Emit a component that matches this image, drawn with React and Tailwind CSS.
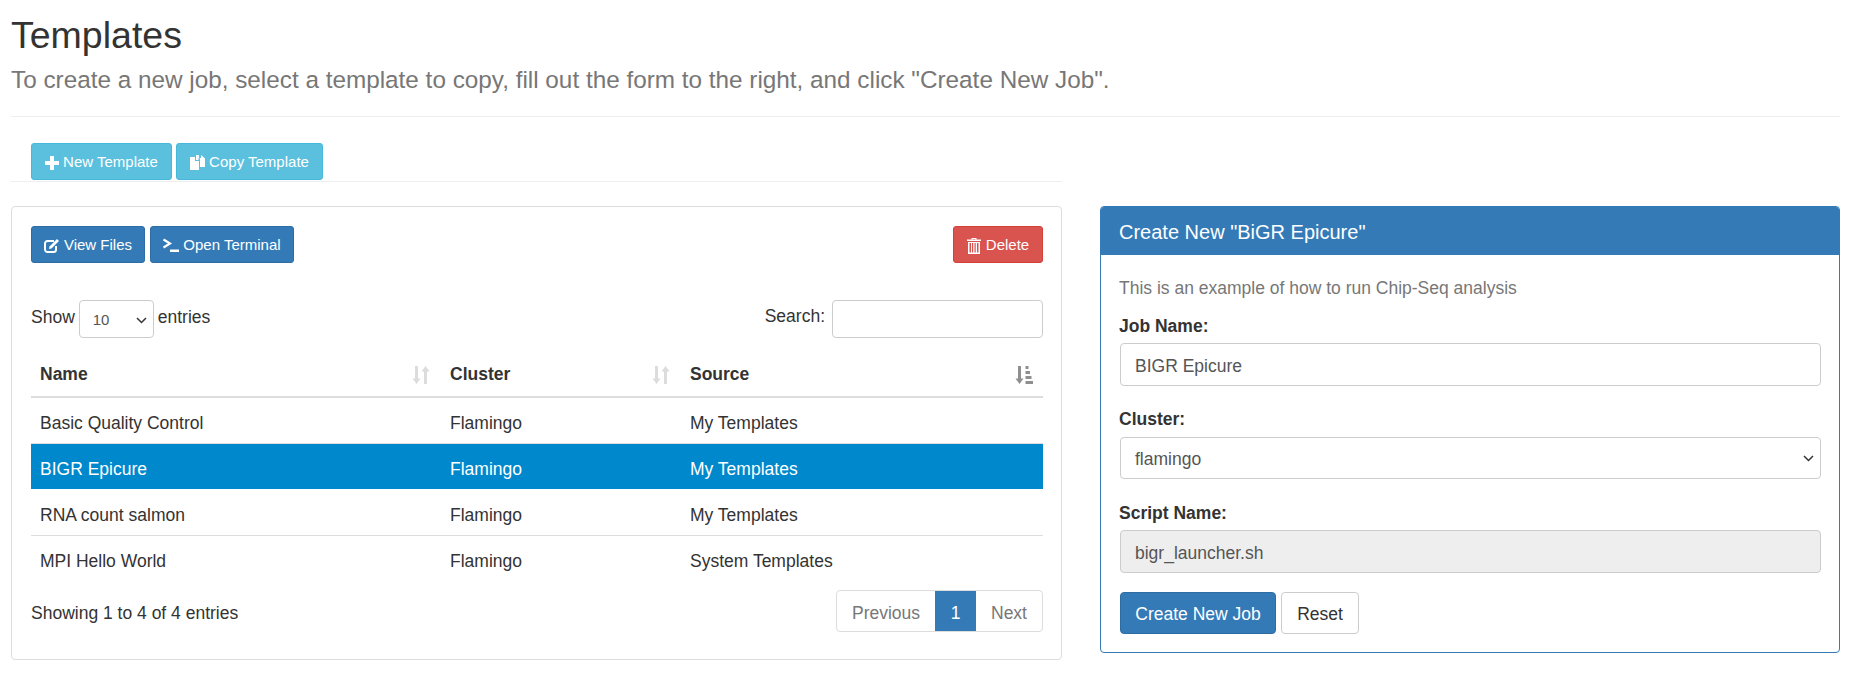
import React from 'react'

const font = { fontFamily: '"Liberation Sans", Arial, sans-serif' }

function PlusIcon() {
    return (
        <svg width="14" height="14" viewBox="0 0 14 14" fill="currentColor" className="shrink-0">
            <path d="M5 0h4v5h5v4H9v5H5V9H0V5h5z" />
        </svg>
    )
}

function CopyIcon() {
    return (
        <svg width="15" height="16" viewBox="0 0 15 16" fill="currentColor" className="shrink-0">
            <path d="M0 2h5v4h4v9H0z" />
            <path d="M6 1.500L9 5H6z" />
            <path d="M6 0h3v2.500l1 1v0H6z" opacity="0.900" />
            <path d="M10 3h1V0l4 3.500V12h-5z" />
        </svg>
    )
}

function EditIcon() {
    return (
        <svg width="16" height="16" viewBox="0 0 16 16" fill="none" className="shrink-0">
            <path d="M10 3H3.500A2.500 2.500 0 0 0 1 5.500v6A2.500 2.500 0 0 0 3.500 14h6a2.500 2.500 0 0 0 2.500-2.500V8" stroke="currentColor" strokeWidth="2" />
            <path d="M5.500 8.500L13 1l2 2-7.500 7.500-2.500.500z" fill="currentColor" />
        </svg>
    )
}

function TerminalIcon() {
    return (
        <svg width="16" height="15" viewBox="0 0 16 15" fill="none" className="shrink-0">
            <path d="M.500 1.500L7 5.500.500 9.500" stroke="currentColor" strokeWidth="2.200" />
            <path d="M7 11.500h9V14H7z" fill="currentColor" />
        </svg>
    )
}

function TrashIcon() {
    return (
        <svg width="14" height="16" viewBox="0 0 14 16" fill="currentColor" className="shrink-0">
            <path d="M4.500 0h5v1.500H14V3H0V1.500h4.500zM5.500 1v.500h3V1z" fillRule="evenodd" />
            <path d="M1 4h12v12H1zM2.500 5v9.500H4V5zm2.500 0v9.500h1.200V5zm2.500 0v9.500h1.200V5zM10 5v9.500h1.500V5z" fillRule="evenodd" />
        </svg>
    )
}

function SortBoth() {
    return (
        <svg width="18" height="18" viewBox="0 0 18 18" fill="#dcdcdc" className="shrink-0">
            <path d="M3 0h3v12.500h2.500L4.500 18 .500 12.500H3z" />
            <path d="M12 18h3V5.500h2.500L13.500 0l-4 5.500H12z" />
        </svg>
    )
}

function SortAsc() {
    return (
        <svg width="18" height="18" viewBox="0 0 18 18" fill="#8f8f8f" className="shrink-0">
            <path d="M3 0h3v12.500h2.500L4.500 18 .500 12.500H3z" />
            <path d="M10.500 0h3v3h-3zM10.500 5h4.500v3h-4.500zM10.500 10h6v3h-6zM10.500 15h7.500v3h-7.500z" />
        </svg>
    )
}

function Button({ className, children }) {
    return (
        <button className={`flex items-center justify-center h-[37px] pt-[2px] border rounded-[3px] text-white text-[15px] ${className}`}>
            {children}
        </button>
    )
}

const rows = [
    ['Basic Quality Control', 'Flamingo', 'My Templates'],
    ['BIGR Epicure', 'Flamingo', 'My Templates'],
    ['RNA count salmon', 'Flamingo', 'My Templates'],
    ['MPI Hello World', 'Flamingo', 'System Templates'],
]

function Chevron({ className }) {
    return (
        <svg width="11" height="7" viewBox="0 0 11 7" fill="none" className={`absolute pointer-events-none ${className}`}>
            <path d="M1 1l4.500 4.500L10 1" stroke="#333" strokeWidth="1.500" />
        </svg>
    )
}

function App() {
    return (
        <div className="min-h-screen bg-white text-[#333] text-[17.500px] px-[11px] overflow-hidden" style={font}>
            {/* Header */}
            <div className="pt-[10px] h-[117px] mr-[2px] border-b border-[#eee]">
                <h1 className="text-[37.500px] leading-[50px] text-[#333]">Templates</h1>
                <p className="text-[24.300px] leading-[30px] mt-[5px] text-[#777]">
                    To create a new job, select a template to copy, fill out the form to the right, and click "Create New Job".
                </p>
            </div>

            <div className="flex gap-[38px] mt-[26px]">
                {/* Left column */}
                <div className="w-[1051px] shrink-0">
                    <div className="pl-[20px] flex gap-1 border-b border-[#eee] h-[39px]">
                        <Button className="w-[141px] gap-1 bg-[#5bc0de] border-[#46b8da]">
                            <PlusIcon /> New Template
                        </Button>
                        <Button className="w-[147px] gap-1 bg-[#5bc0de] border-[#46b8da]">
                            <CopyIcon /> Copy Template
                        </Button>
                    </div>

                    <div className="mt-[24px] h-[454px] border border-[#ddd] rounded-[4px] pl-[19px] pr-[18px] pt-[19px]">
                        <div className="flex justify-between">
                            <div className="flex gap-[5px]">
                                <Button className="w-[114px] gap-1 bg-[#337ab7] border-[#2e6da4]">
                                    <EditIcon /> View Files
                                </Button>
                                <Button className="w-[144px] gap-1 bg-[#337ab7] border-[#2e6da4]">
                                    <TerminalIcon /> Open Terminal
                                </Button>
                            </div>
                            <Button className="w-[90px] gap-[5px] bg-[#d9534f] border-[#d43f3a]">
                                <TrashIcon /> Delete
                            </Button>
                        </div>

                        <div className="flex justify-between mt-[37px]">
                            <div className="flex items-start gap-1">
                                <span className="leading-[34px]">Show</span>
                                <div className="relative w-[75px] h-[38px] border border-[#ccc] rounded-[4px] text-[15px] pl-[13px] pt-[8px] text-[#555]">
                                    10
                                    <Chevron className="right-[6px] top-[16px]" />
                                </div>
                                <span className="leading-[34px]">entries</span>
                            </div>
                            <div className="flex items-start gap-[7px]">
                                <span className="leading-[32px]">Search:</span>
                                <input className="w-[211px] h-[38px] border border-[#ccc] rounded-[4px]" />
                            </div>
                        </div>

                        <table className="w-full mt-[11px] border-collapse">
                            <thead>
                                <tr className="h-[48px] border-b-2 border-[#ddd]">
                                    <th className="w-[409px] text-left font-bold pl-[9px] pr-[10px] pt-[4px]">
                                        <div className="flex justify-between items-center">Name <SortBoth /></div>
                                    </th>
                                    <th className="w-[240px] text-left font-bold px-[10px] pt-[4px]">
                                        <div className="flex justify-between items-center">Cluster <SortBoth /></div>
                                    </th>
                                    <th className="text-left font-bold px-[10px] pt-[4px]">
                                        <div className="flex justify-between items-center">Source <SortAsc /></div>
                                    </th>
                                </tr>
                            </thead>
                            <tbody>
                                {rows.map((row, i) => (
                                    <tr key={row[0]} className={`h-[46px] ${i === 1 ? 'bg-[#0088cc] text-white' : ''} ${i === 2 ? 'border-b border-[#ddd]' : ''} ${i === 0 ? 'border-b border-[#ddd]' : ''}`}>
                                        {row.map((cell, j) => (
                                            <td key={cell} className={`pr-[10px] pt-[6px] ${j === 0 ? 'pl-[9px]' : 'pl-[10px]'}`}>{cell}</td>
                                        ))}
                                    </tr>
                                ))}
                            </tbody>
                        </table>

                        <div className="flex justify-between items-start mt-[9px]">
                            <span className="leading-[46px]">Showing 1 to 4 of 4 entries</span>
                            <div className="flex h-[42px] border border-[#ddd] rounded-[4px] items-stretch leading-[44px] text-[#777]">
                                <span className="w-[98px] text-center">Previous</span>
                                <span className="w-[41px] text-center bg-[#337ab7] text-white">1</span>
                                <span className="w-[66px] text-center">Next</span>
                            </div>
                        </div>
                    </div>
                </div>

                {/* Right panel */}
                <div className="w-[740px] shrink-0 mt-[63px] h-[447px] border border-[#337ab7] rounded-[4px] overflow-hidden">
                    <div className="h-[48px] bg-[#337ab7] text-white text-[20px] leading-[51px] px-[18px]">Create New "BiGR Epicure"</div>
                    <div className="pl-[18px] pr-[18px] pt-[20px]">
                        <p className="text-[#777] leading-[26px]">This is an example of how to run Chip-Seq analysis</p>
                        <label className="block font-bold mt-[12px] leading-[26px]">Job Name:</label>
                        <div className="mt-[4px] ml-[1px] h-[43px] border border-[#ccc] rounded-[4px] px-[14px] leading-[45px] text-[#555]">BIGR Epicure</div>
                        <label className="block font-bold mt-[20px] leading-[26px]">Cluster:</label>
                        <div className="relative mt-[5px] ml-[1px] h-[42px] border border-[#ccc] rounded-[4px] px-[14px] leading-[43px] text-[#555]">
                            flamingo
                            <Chevron className="right-[6px] top-[17px]" />
                        </div>
                        <label className="block font-bold mt-[21px] leading-[26px]">Script Name:</label>
                        <div className="mt-[4px] ml-[1px] h-[43px] border border-[#ccc] bg-[#eee] rounded-[4px] px-[14px] leading-[45px] text-[#555]">bigr_launcher.sh</div>
                        <div className="flex gap-[5px] mt-[19px] ml-[1px]">
                            <button className="h-[42px] w-[156px] pt-[2px] bg-[#337ab7] border border-[#2e6da4] rounded-[4px] text-white">Create New Job</button>
                            <button className="h-[42px] w-[78px] pt-[2px] bg-white border border-[#ccc] rounded-[4px] text-[#333]">Reset</button>
                        </div>
                    </div>
                </div>
            </div>
        </div>
    )
}

export default App
